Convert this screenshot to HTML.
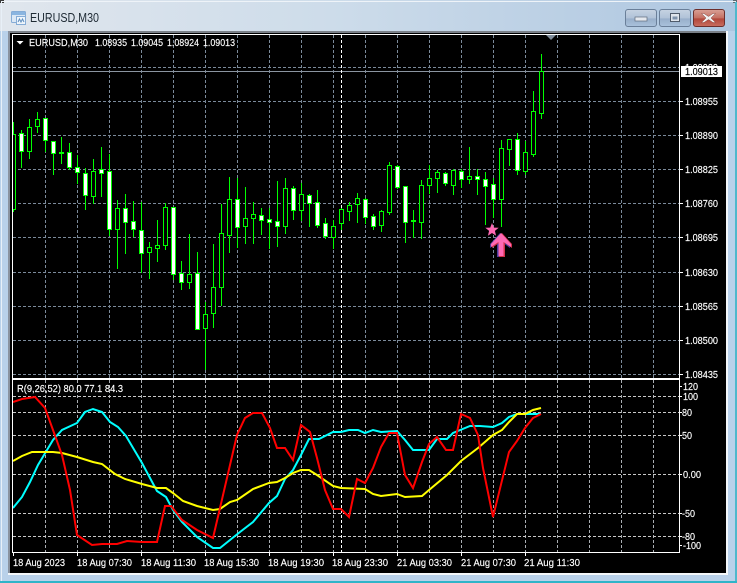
<!DOCTYPE html>
<html><head><meta charset="utf-8"><title>EURUSD,M30</title>
<style>
html,body{margin:0;padding:0;width:737px;height:583px;overflow:hidden;background:#b9d1ea}
svg{display:block}
text{font-family:"Liberation Sans",sans-serif;font-size:10.5px;fill:#fff;stroke:#fff;stroke-width:.15px}
</style></head><body>
<svg width="737" height="583" viewBox="0 0 737 583" xmlns="http://www.w3.org/2000/svg">
<defs>
<linearGradient id="tb" x1="0" x2="1" y1="0" y2="0"><stop offset="0" stop-color="#e0e6ed"/><stop offset=".45" stop-color="#cddcea"/><stop offset="1" stop-color="#adc6e0"/></linearGradient>
<linearGradient id="btn" x1="0" x2="0" y1="0" y2="1"><stop offset="0" stop-color="#c6d3e2"/><stop offset=".5" stop-color="#b0c2d8"/><stop offset=".55" stop-color="#98afca"/><stop offset="1" stop-color="#aac2dc"/></linearGradient>
<linearGradient id="cls" x1="0" x2="0" y1="0" y2="1"><stop offset="0" stop-color="#d9a196"/><stop offset=".5" stop-color="#c46f62"/><stop offset=".55" stop-color="#b2463a"/><stop offset="1" stop-color="#c96e60"/></linearGradient>
<clipPath id="c1"><rect x="13" y="35" width="666" height="343"/></clipPath>
<clipPath id="c2"><rect x="13" y="380" width="666" height="172"/></clipPath>
</defs>
<!-- frame -->
<rect width="737" height="583" fill="#b9d1ea"/>
<rect x="0" y="0" width="737" height="31" fill="url(#tb)"/>
<rect x="0" y="0" width="4" height="3" fill="#3a3a3a"/>
<rect x="733" y="0" width="4" height="3" fill="#5c6a70"/>
<rect x="1" y="1" width="735" height="1" fill="#eef3f8"/>
<rect x="1" y="2" width="1" height="579" fill="#e8f0f8"/>
<rect x="735" y="2" width="2" height="580" fill="#4fb8cc"/>
<rect x="0" y="581" width="737" height="2" fill="#2fb4c8"/>
<rect x="8" y="31" width="718" height="2" fill="#7a8088"/>
<rect x="8" y="31" width="2" height="543" fill="#8a93a0"/>
<rect x="10" y="33" width="716" height="540" fill="#000"/>
<rect x="726" y="31" width="2" height="544" fill="#f4f7fa"/>
<rect x="8" y="573" width="720" height="2" fill="#f4f7fa"/>

<!-- title icon & text -->
<g>
<rect x="11.500" y="11.500" width="14" height="11" rx="1" fill="#dbe8f5" stroke="#85acd6"/>
<rect x="12" y="12" width="13" height="3" fill="#8ab5e0"/>
<rect x="16.500" y="16.500" width="9" height="8" fill="#eef5fb" stroke="#85acd6"/>
<path d="M18 22l1.500-3 1.500 3 1.500-3 1.500 3" fill="none" stroke="#5f8fc0"/>
</g>
<text x="30" y="22" textLength="69" lengthAdjust="spacingAndGlyphs" style="font-size:12.500px;fill:#1e2a34;stroke:none">EURUSD,M30</text>

<!-- buttons -->
<rect x="625.500" y="9.500" width="31" height="17" rx="2.500" fill="url(#btn)" stroke="#6a7f99"/>
<rect x="635" y="17" width="12" height="4" fill="#e4e8ee" stroke="#5f6b7c" stroke-width=".7"/>
<rect x="659.500" y="9.500" width="31" height="17" rx="2.500" fill="url(#btn)" stroke="#6a7f99"/>
<rect x="670.500" y="13.500" width="9" height="8" fill="#dfe5ec" stroke="#4f5b6b"/>
<rect x="672.500" y="16.500" width="5" height="3" fill="#7f93ac"/>
<rect x="693.500" y="9.500" width="31" height="17" rx="2.500" fill="url(#cls)" stroke="#6d2f2c"/>
<path d="M704 13.500l4.500 3 4.500-3h2.500l-4.500 4.500 4.500 4.500h-2.500l-4.500-3-4.500 3h-2.500l4.500-4.500-4.500-4.500z" fill="#f0f0f0" stroke="#8a4a44" stroke-width=".5"/>

<!-- chart borders -->
<path d="M12.500 34.500H679.500V378.500H12.500z" fill="none" stroke="#fff"/>
<path d="M12.500 379.500H679.500V552.500H12.500z" fill="none" stroke="#fff"/>

<!-- grid main -->
<g clip-path="url(#c1)" shape-rendering="crispEdges">
<path fill="none" stroke="#7b8a9a" stroke-dasharray="3 2" d="M45.500 35V378M77.500 35V378M109.500 35V378M141.500 35V378M173.500 35V378M205.500 35V378M237.500 35V378M269.500 35V378M301.500 35V378M333.500 35V378M365.500 35V378M397.500 35V378M429.500 35V378M461.500 35V378M493.500 35V378M525.500 35V378M557.500 35V378M589.500 35V378M621.500 35V378M653.500 35V378M13 67.500H679M13 101.500H679M13 135.500H679M13 169.500H679M13 203.500H679M13 237.500H679M13 272.500H679M13 306.500H679M13 340.500H679M13 374.500H679"/>
<path d="M13 71.500H679" stroke="#8b95a1" fill="none"/>
<path d="M341.500 35V378" stroke="#fff" stroke-dasharray="3 2" fill="none"/>
<!-- wicks -->
<path fill="none" stroke="#00ff00" d="M13.500 122V212M21.500 130V168M29.500 119V159M37.500 112V133M45.500 118V152M53.500 141V175M61.500 137V164M69.500 143V170M77.500 155V184M85.500 168V210M93.500 159V204M101.500 147V197M109.500 154V236M117.500 200V269M125.500 194V254M133.500 201V237M141.500 202V273M149.500 242V279M157.500 220V262M165.500 203V250M173.500 207V280M181.500 261V290M189.500 234V289M197.500 252V330M205.500 302V370M213.500 244V328M221.500 204V306M229.500 177V253M237.500 178V248M245.500 187V244M253.500 202V244M261.500 208V235M269.500 208V249M277.500 181V247M285.500 178V234M293.500 186V220M301.500 183V221M309.500 194V227M317.500 190V228M325.500 218V239M333.500 220V249M341.500 208V230M349.500 202V221M357.500 193V223M365.500 198V224M373.500 214V230M381.500 210V232M389.500 162V215M397.500 165V189M405.500 186V243M413.500 210V238M421.500 180V239M429.500 165V194M437.500 170V193M445.500 172V186M453.500 169V195M461.500 169V188M469.500 147V184M477.500 169V195M485.500 172V225M493.500 178V218M501.500 140V227M509.500 139V166M517.500 133V175M525.500 141V175M533.500 91V157M541.500 54V119"/>
<!-- hollow bodies -->
<path fill="#000" stroke="#00ff00" d="M11.500 134.500h4v75h-4zM27.500 127.500h4v24h-4zM35.500 119.500h4v7h-4zM91.500 171.500h4v25h-4zM115.500 208.500h4v21h-4zM147.500 247.500h4v5h-4zM155.500 245.500h4v3h-4zM163.500 207.500h4v38h-4zM187.500 274.500h4v8h-4zM203.500 314.500h4v14h-4zM211.500 287.500h4v26h-4zM219.500 233.500h4v54h-4zM227.500 199.500h4v36h-4zM243.500 218.500h4v8h-4zM251.500 214.500h4v4h-4zM283.500 188.500h4v38h-4zM299.500 194.500h4v16h-4zM331.500 226.500h4v11h-4zM339.500 209.500h4v14h-4zM347.500 205.500h4v6h-4zM355.500 198.500h4v6h-4zM379.500 211.500h4v14h-4zM387.500 165.500h4v47h-4zM419.500 185.500h4v37h-4zM427.500 178.500h4v7h-4zM435.500 172.500h4v6h-4zM451.500 170.500h4v15h-4zM467.500 176.500h4v3h-4zM499.500 148.500h4v51h-4zM507.500 139.500h4v10h-4zM523.500 152.500h4v19h-4zM531.500 111.500h4v43h-4zM539.500 71.500h4v42h-4z"/>
<!-- white bodies -->
<path fill="#fff" stroke="#00ff00" d="M19.500 133.500h4v18h-4zM43.500 118.500h4v22h-4zM51.500 141.500h4v12h-4zM59.500 152.500h4v1h-4zM67.500 152.500h4v15h-4zM75.500 167.500h4v5h-4zM83.500 173.500h4v22h-4zM99.500 169.500h4v4h-4zM107.500 171.500h4v58h-4zM123.500 208.500h4v14h-4zM131.500 221.500h4v8h-4zM139.500 230.500h4v23h-4zM171.500 207.500h4v67h-4zM179.500 273.500h4v9h-4zM195.500 273.500h4v56h-4zM235.500 199.500h4v28h-4zM259.500 215.500h4v5h-4zM267.500 219.500h4v3h-4zM275.500 221.500h4v5h-4zM291.500 188.500h4v22h-4zM307.500 195.500h4v8h-4zM315.500 202.500h4v23h-4zM323.500 223.500h4v13h-4zM363.500 199.500h4v18h-4zM371.500 216.500h4v10h-4zM395.500 166.500h4v21h-4zM403.500 186.500h4v36h-4zM411.500 220.500h4v1h-4zM443.500 173.500h4v10h-4zM459.500 171.500h4v8h-4zM475.500 176.500h4v3h-4zM483.500 179.500h4v7h-4zM491.500 184.500h4v15h-4zM515.500 139.500h4v31h-4z"/>
</g>
<g clip-path="url(#c1)">
<!-- signals -->
<polygon points="492,223 493.800,227.600 498.700,227.800 494.900,230.900 496.100,235.700 492,233 487.900,235.700 489.100,230.900 485.300,227.800 490.200,227.600" fill="#ff69b4"/>
<polygon transform="translate(-1 0)" points="501,233 511,244 511,248 504,243 504,257 498,257 498,243 491,248 491,244" fill="#4a3a9a"/>
<polygon transform="translate(1 0)" points="501,233 511,244 511,248 504,243 504,257 498,257 498,243 491,248 491,244" fill="#d0304a"/>
<polygon points="501,233 511,244 511,247 503.500,242 503.500,256 498.500,256 498.500,242 491,247 491,244" fill="#ff69b4"/>
</g>
<polygon points="546,35 556,35 551,40" fill="#7f8c9a"/>

<!-- grid sub -->
<g clip-path="url(#c2)">
<g shape-rendering="crispEdges">
<path fill="none" stroke="#a9adb2" stroke-dasharray="3 2" d="M45.500 380V552M77.500 380V552M109.500 380V552M141.500 380V552M173.500 380V552M205.500 380V552M237.500 380V552M269.500 380V552M301.500 380V552M333.500 380V552M365.500 380V552M397.500 380V552M429.500 380V552M461.500 380V552M493.500 380V552M525.500 380V552M557.500 380V552M589.500 380V552M621.500 380V552M653.500 380V552"/>
<path fill="none" stroke="#c8c8c8" stroke-dasharray="3 2" d="M13 396.500H679M13 412.500H679M13 435.500H679M13 474.500H679M13 513.500H679M13 536.500H679"/>
<path d="M341.500 380V552" stroke="#fff" stroke-dasharray="3 2" fill="none"/>
</g>
<polyline fill="none" stroke="#00ffff" stroke-width="2" points="13,508 22,497 30,482 38,465 47,450 53,440 62,430 77,423 85,412 93,409 102,412 110,422 118,427 126,436 142,463 150,478 157,491 166,497 173,510 182,522 197,537 213,548 220,548 230,540 240,532 253,522 269,503 277,496 285,479 293,470 301,455 309,439 319,439 333,432 341,432 349,430 358,430 365,433 373,430 381,432 397,431 405,440 413,450 429,450 437,439 447,439 453,433 470,426 480,426 493,427 502,423 509,417 517,414 541,414"/>
<polyline fill="none" stroke="#ffff00" stroke-width="2" points="13,461 22,456 32,452 53,452 62,453 77,457 93,462 102,464 115,474 125,479 142,484 157,488 166,488 173,493 183,501 197,506 213,510 220,509 230,502 237,500 240,498 253,489 269,483 277,482 285,478 293,473 301,470 309,470 317,475 333,486 341,488 365,489 373,494 381,496 397,494 405,497 422,496 429,490 447,475 461,461 478,448 493,435 502,430 509,422 517,414 525,414 533,410 541,408"/>
<polyline fill="none" stroke="#ff0000" stroke-width="2" points="13,402 22,399 35,397 45,408 53,430 62,455 70,490 77,535 92,545 102,544 117,544 127,541 142,542 157,542 165,506 171,506 182,520 197,530 213,538 220,508 230,465 237,435 245,418 253,413 262,413 270,428 277,448 285,448 293,460 301,425 310,432 317,458 325,490 333,509 341,509 349,517 357,479 365,483 373,468 381,447 389,433 397,433 405,475 413,488 422,462 429,444 437,437 446,450 453,450 461,414 470,418 478,435 483,468 493,517 509,452 517,441 525,428 533,418 541,414"/>
</g>

<!-- legend -->
<polygon points="16.500,41 23.500,41 20,44.500" fill="#fff"/>
<text x="29" y="46" textLength="59" lengthAdjust="spacingAndGlyphs">EURUSD,M30</text>
<text x="95" y="46" textLength="32" lengthAdjust="spacingAndGlyphs">1.08935</text>
<text x="131" y="46" textLength="32" lengthAdjust="spacingAndGlyphs">1.09045</text>
<text x="167" y="46" textLength="32" lengthAdjust="spacingAndGlyphs">1.08924</text>
<text x="203" y="46" textLength="32" lengthAdjust="spacingAndGlyphs">1.09013</text>
<text x="17" y="392" textLength="106" lengthAdjust="spacingAndGlyphs">R(9,26,52) 80.0 77.1 84.3</text>

<!-- price axis -->
<path stroke="#fff" fill="none" d="M680 101.500h3M680 135.500h3M680 169.500h3M680 203.500h3M680 237.500h3M680 272.500h3M680 306.500h3M680 340.500h3M680 374.500h3M680 386.500h2M680 396.500h2M680 412.500h2M680 435.500h2M680 474.500h2M680 513.500h2M680 536.500h2M680 545.500h2"/>
<g>
<text x="685" y="71" textLength="33" lengthAdjust="spacingAndGlyphs">1.09020</text>
<text x="685" y="105" textLength="33" lengthAdjust="spacingAndGlyphs">1.08955</text>
<text x="685" y="139" textLength="33" lengthAdjust="spacingAndGlyphs">1.08890</text>
<text x="685" y="173" textLength="33" lengthAdjust="spacingAndGlyphs">1.08825</text>
<text x="685" y="207" textLength="33" lengthAdjust="spacingAndGlyphs">1.08760</text>
<text x="685" y="241" textLength="33" lengthAdjust="spacingAndGlyphs">1.08695</text>
<text x="685" y="276" textLength="33" lengthAdjust="spacingAndGlyphs">1.08630</text>
<text x="685" y="310" textLength="33" lengthAdjust="spacingAndGlyphs">1.08565</text>
<text x="685" y="344" textLength="33" lengthAdjust="spacingAndGlyphs">1.08500</text>
<text x="685" y="378" textLength="33" lengthAdjust="spacingAndGlyphs">1.08435</text>
</g>
<rect x="681" y="66" width="41" height="11" fill="#fff"/>
<text x="685" y="75" textLength="33" lengthAdjust="spacingAndGlyphs" style="fill:#000;stroke:#000">1.09013</text>

<!-- rsi axis -->
<text x="683" y="390" textLength="15" lengthAdjust="spacingAndGlyphs">120</text>
<text x="683" y="400" textLength="15" lengthAdjust="spacingAndGlyphs">100</text>
<text x="682" y="416" textLength="10" lengthAdjust="spacingAndGlyphs">80</text>
<text x="682" y="439" textLength="10" lengthAdjust="spacingAndGlyphs">50</text>
<text x="683" y="478" textLength="18" lengthAdjust="spacingAndGlyphs">0.00</text>
<text x="682" y="517" textLength="13" lengthAdjust="spacingAndGlyphs">-50</text>
<text x="682" y="540" textLength="13" lengthAdjust="spacingAndGlyphs">-80</text>
<text x="683" y="549" textLength="18" lengthAdjust="spacingAndGlyphs">-100</text>

<!-- time axis -->
<path stroke="#fff" fill="none" d="M13.500 553v3M77.500 553v3M141.500 553v3M205.500 553v3M269.500 553v3M333.500 553v3M397.500 553v3M461.500 553v3M525.500 553v3"/>
<text x="13" y="566" textLength="52" lengthAdjust="spacingAndGlyphs">18 Aug 2023</text>
<text x="77" y="566" textLength="55" lengthAdjust="spacingAndGlyphs">18 Aug 07:30</text>
<text x="141" y="566" textLength="55" lengthAdjust="spacingAndGlyphs">18 Aug 11:30</text>
<text x="204" y="566" textLength="55" lengthAdjust="spacingAndGlyphs">18 Aug 15:30</text>
<text x="268" y="566" textLength="56" lengthAdjust="spacingAndGlyphs">18 Aug 19:30</text>
<text x="332" y="566" textLength="56" lengthAdjust="spacingAndGlyphs">18 Aug 23:30</text>
<text x="397" y="566" textLength="55" lengthAdjust="spacingAndGlyphs">21 Aug 03:30</text>
<text x="461" y="566" textLength="55" lengthAdjust="spacingAndGlyphs">21 Aug 07:30</text>
<text x="524" y="566" textLength="56" lengthAdjust="spacingAndGlyphs">21 Aug 11:30</text>
</svg>
</body></html>
